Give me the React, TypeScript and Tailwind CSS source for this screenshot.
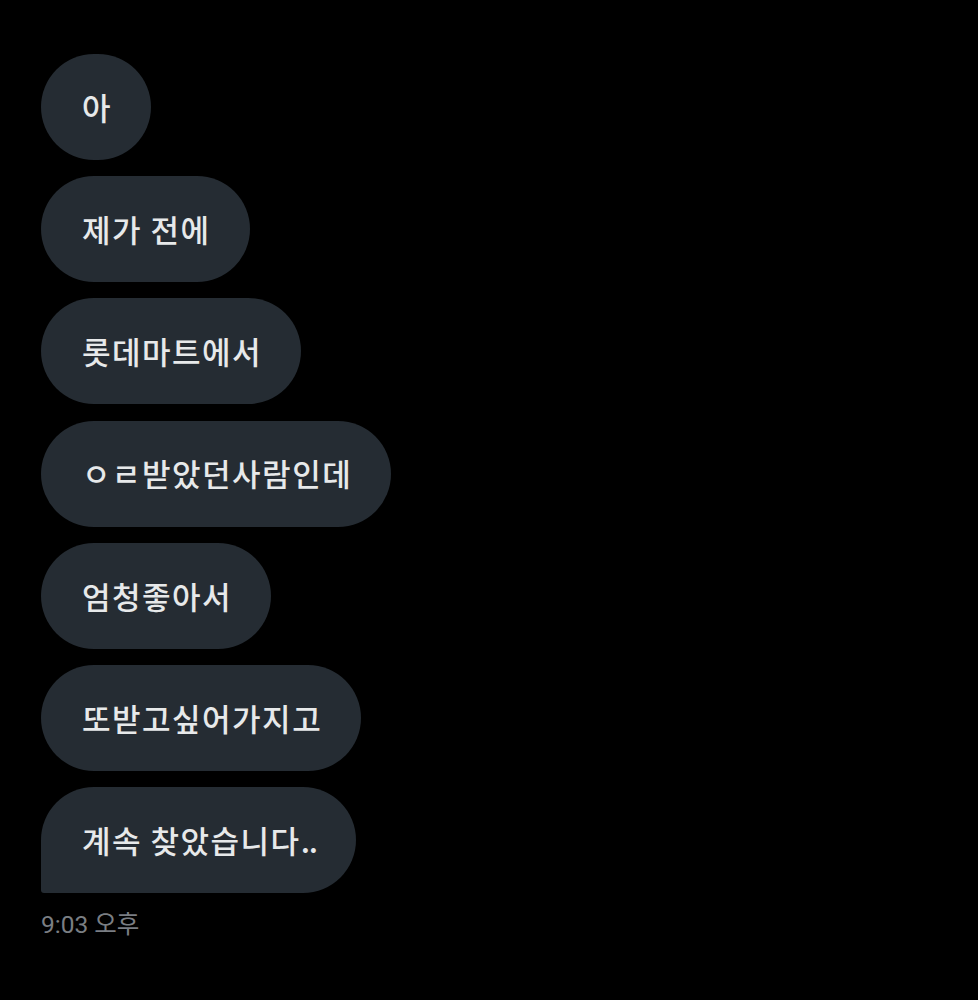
const messages = [
  "아",
  "제가 전에",
  "롯데마트에서",
  "ㅇㄹ받았던사람인데",
  "엄청좋아서",
  "또받고싶어가지고",
  "계속 찾았습니다",
];

export default function App() {
  return (
    <div className="min-h-[1000px] w-full bg-black pl-[41px] pt-[54px] font-['Noto_Sans_CJK_KR',sans-serif]">
      <div className="flex flex-col items-start gap-[16.2px]">
        {messages.map((text, i) => {
          const last = i === messages.length - 1;
          return (
            <div
              key={i}
              className={
                "flex h-[106px] items-center whitespace-pre bg-[#252c33] pl-[41px] pr-[39px] text-[31px] font-medium tracking-[1.5px] text-[#e7e9ea] " +
                (last
                  ? "rounded-t-[53px] rounded-br-[53px] rounded-bl-[3px]"
                  : "rounded-[53px]")
              }
            >
              {text}
              {last && <span className="tracking-[-1px]">..</span>}
            </div>
          );
        })}
      </div>
      <div className="mt-[17px] font-['Roboto','Noto_Sans_CJK_KR',sans-serif] text-[24.5px] leading-[30px] text-[#7a7e83]">
        9:03 오후
      </div>
    </div>
  );
}
